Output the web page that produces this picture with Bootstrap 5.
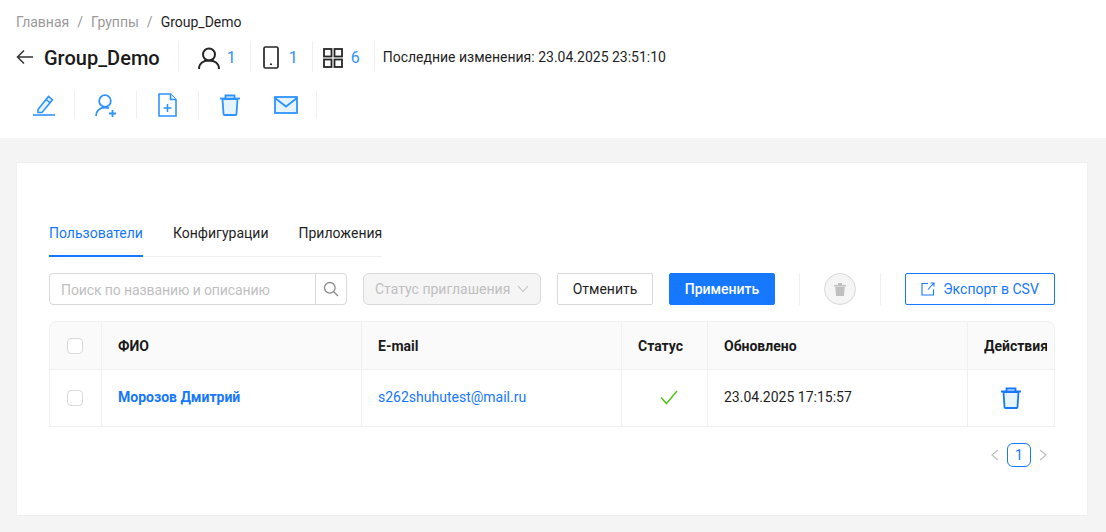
<!DOCTYPE html>
<html lang="ru">
<head>
  <meta charset="UTF-8" />
  <title>Group_Demo</title>
  <link href="https://cdn.jsdelivr.net/npm/bootstrap@5.3.3/dist/css/bootstrap.min.css" rel="stylesheet">
  <style>
    html, body { height: 532px; overflow: hidden; }
    body { font-family: Roboto, "Liberation Sans", sans-serif; font-size: 14px; color: #1f1f1f; background: #f4f4f4; }
    svg { display: block; flex: none; }

    .top-head { background: #fff; height: 138px; padding: 14px 16px 0; }
    .crumbs { margin: 0; height: 16px; line-height: 16px; font-size: 14px; --bs-breadcrumb-divider-color: #9a9a9a; --bs-breadcrumb-item-padding-x: 8px; --bs-breadcrumb-margin-bottom: 0; }
    .crumbs .breadcrumb-item a { color: #9a9a9a; text-decoration: none; }
    .crumbs .breadcrumb-item.active { color: #1f1f1f; }
    .title-row { height: 31px; margin-top: 11px; }
    .title-row h1 { font-size: 20px; font-weight: 500; margin: 0 0 0 10px; padding-top: 4px; line-height: 31px; color: #1a1a1a; }
    .stat { height: 31px; padding-top: 2px; border-left: 1px solid #f0f0f0; color: #2f93ff; font-size: 16px; }
    .stat-users { margin-left: 18px; padding-left: 19px; width: 72px; gap: 7px; }
    .stat-phones { width: 62px; padding-left: 12px; gap: 10px; }
    .stat-apps { width: 62px; padding-left: 10px; gap: 8px; }
    .changed { height: 31px; padding-top: 2px; border-left: 1px solid #f0f0f0; padding-left: 8px; color: #1f1f1f; }
    .tool-row { margin-top: 19px; height: 28px; }
    .tool { height: 28px; border-right: 1px solid #f0f0f0; width: 62px; }
    .tool-first { width: 59px; padding-left: 17px; }
    .tool-wide { width: 118px; padding-left: 21px; gap: 34px; }

    .body-pad { padding: 24px 18px 16px 16px; }
    .main-card { --bs-card-border-color: #f0f0f0; --bs-card-border-radius: 0; height: 354px; padding: 54px 32px 0; }
    .tabs-line { width: 333px; height: 40px; border-bottom: 1px solid #f0f0f0; gap: 30px; }
    .tabs-line .nav-link { padding: 0; height: 40px; line-height: 33px; color: #1f1f1f; font-size: 14px; }
    .tabs-line .nav-link.active { color: #1677ff; border-bottom: 2px solid #1677ff; }

    .filter-row { margin-top: 16px; height: 32px; }
    .search-box { width: 298px; height: 32px; }
    .search-box .form-control { height: 32px; font-size: 14px; padding: 5px 11px 3px; letter-spacing: -.1px; border-color: #d9d9d9; border-radius: 4px 0 0 4px; }
    .search-box .form-control::placeholder { color: #bfbfbf; }
    .search-btn { width: 32px; padding: 0; border: 1px solid #d9d9d9; border-left: 1px solid #d9d9d9; border-radius: 0 4px 4px 0; background: #fff; }
    .status-drop { width: 178px; height: 32px; margin-left: 16px; padding: 0 11px; background: #f5f5f5; border: 1px solid #d9d9d9; border-radius: 6px; color: #bfbfbf; }
    .btn-cancel { width: 96px; height: 32px; margin-left: 16px; padding: 0; font-size: 14px; color: #1f1f1f; background: #fff; border: 1px solid #d9d9d9; border-radius: 2px; }
    .btn-apply { width: 106px; height: 32px; margin-left: 16px; padding: 0; font-size: 14px; font-weight: 500; color: #fff; background: #1677ff; border: 1px solid #1677ff; border-radius: 2px; }
    .v-sep { width: 1px; height: 32px; background: #f0f0f0; }
    .del-round { width: 32px; height: 32px; margin: 0 24px; padding: 0; border-radius: 50%; background: #f5f5f5; border: 1px solid #d9d9d9; }
    .btn-export { width: 150px; height: 32px; margin-left: 24px; padding: 0; gap: 8px; font-size: 14px; color: #1677ff; background: #fff; border: 1px solid #1677ff; border-radius: 2px; }

    .grid-wrap { margin-top: 16px; width: 1006px; border: 1px solid #f0f0f0; border-radius: 8px 8px 0 0; border-bottom: 0; overflow: hidden; }
    .grid-table { table-layout: fixed; width: 1006px; margin: 0; border-collapse: separate; border-spacing: 0; --bs-table-bg: transparent; }
    .grid-table th, .grid-table td { border: 0; border-right: 1px solid #f0f0f0; border-bottom: 1px solid #f0f0f0; padding: 0 16px; vertical-align: middle; font-size: 14px; color: #1f1f1f; white-space: nowrap; overflow: hidden; }
    .grid-table th { height: 48px; padding-top: 1px; background: #fafafa; font-weight: 700; color: #1a1a1a; }
    .grid-table td { height: 57px; padding-bottom: 1px; }
    .grid-table th:last-child { border-right: 0; }
    .grid-table th.clip-cell { padding-right: 9px; }
    .check-box { width: 16px; height: 16px; margin-left: 1px; border: 1px solid #d9d9d9; border-radius: 4px; background: #fff; }
    .user-link { color: #1677ff; font-weight: 700; text-decoration: none; }
    .mail-link { color: #1677ff; text-decoration: none; }
    .status-ok { margin-left: 22px; }
    .row-trash { margin-left: 17px; }
    .clip-head { overflow: hidden; }

    .pager-row { margin-top: 16px; width: 1006px; height: 24px; padding-right: 7px; gap: 7px; }
    .page-one { width: 24px; height: 24px; line-height: 22px; text-align: center; color: #1677ff; border: 1px solid #1677ff; border-radius: 6px; }
  </style>
</head>
<body>

  <div class="top-head">
    <nav aria-label="breadcrumb">
      <ol class="breadcrumb crumbs">
        <li class="breadcrumb-item"><a href="#">Главная</a></li>
        <li class="breadcrumb-item"><a href="#">Группы</a></li>
        <li class="breadcrumb-item active" aria-current="page">Group_Demo</li>
      </ol>
    </nav>

    <div class="title-row d-flex align-items-center">
      <svg width="18" height="18" viewBox="0 0 18 18" fill="none" stroke="#333" stroke-width="1.500"><path d="M17 9H1.500M8 2.500 1.500 9 8 15.500"/></svg>
      <h1>Group_Demo</h1>
      <div class="stat stat-users d-flex align-items-center">
        <svg width="22" height="22" viewBox="0 0 22 22" fill="none" stroke="#262626" stroke-width="2"><circle cx="11" cy="7.500" r="6"/><path d="M1 22c0-5.500 4-8.500 10-8.500S21 16.500 21 22"/></svg>
        <span>1</span>
      </div>
      <div class="stat stat-phones d-flex align-items-center">
        <svg width="16" height="23" viewBox="0 0 16 23" fill="none" stroke="#262626" stroke-width="1.700"><rect x="1" y="1" width="14" height="21" rx="1.500"/><rect x="7" y="17.500" width="2" height="1.500" fill="#262626" stroke="none"/></svg>
        <span>1</span>
      </div>
      <div class="stat stat-apps d-flex align-items-center">
        <svg width="20" height="20" viewBox="0 0 20 20" fill="none" stroke="#262626" stroke-width="1.800"><rect x="1" y="1" width="7.500" height="7.500"/><rect x="11.500" y="1" width="7.500" height="7.500"/><rect x="1" y="11.500" width="7.500" height="7.500"/><rect x="11.500" y="11.500" width="7.500" height="7.500"/></svg>
        <span>6</span>
      </div>
      <div class="changed d-flex align-items-center">Последние изменения: 23.04.2025 23:51:10</div>
    </div>

    <div class="tool-row d-flex">
      <div class="tool tool-first d-flex align-items-center">
        <svg width="22" height="22" viewBox="0 0 22 22" fill="none" stroke="#2f93ff" stroke-width="1.600"><path d="M5 15.500 15.500 2.500l4 3.300-10.500 12.700H5z" fill="#e6f4ff"/><path d="M13.200 5.500l4 3.300"/><path d="M0 21h22"/></svg>
      </div>
      <div class="tool d-flex align-items-center justify-content-center">
        <svg width="21" height="23" viewBox="0 0 21 23" fill="none" stroke="#2f93ff" stroke-width="1.800"><circle cx="10" cy="7" r="5.800"/><path d="M1 22c0-5 3.500-8.500 9-8.500 1.500 0 3 .2 4 .7"/><path d="M14 19.500h7M17.500 16v7" stroke-width="1.800"/></svg>
      </div>
      <div class="tool d-flex align-items-center justify-content-center">
        <svg width="19" height="24" viewBox="0 0 19 24" fill="none" stroke="#2f93ff" stroke-width="1.600"><path d="M1 1h11.500L18 6.500V23H1z"/><path d="M12.500 1v5.500H18" fill="#e6f4ff"/><path d="M5.500 15h8M9.500 11v8"/></svg>
      </div>
      <div class="tool tool-wide d-flex align-items-center">
        <svg width="20" height="22" viewBox="0 0 20 22" fill="none" stroke="#2f93ff" stroke-width="1.800"><path d="M2.500 5h15l-1 15a1 1 0 0 1-1 1h-11a1 1 0 0 1-1-1z" fill="#e6f4ff"/><path d="M0 4.500h20"/><path d="M5.500 4.500V1.500h9v3"/></svg>
        <svg width="24" height="18" viewBox="0 0 24 18" fill="#e6f4ff" stroke="#2f93ff" stroke-width="1.800"><rect x="1" y="1" width="22" height="16"/><path d="M1 2l11 8.500L23 2" fill="none"/></svg>
      </div>
    </div>
  </div>

  <div class="body-pad">
    <div class="card main-card">
      <ul class="nav tabs-line flex-nowrap">
        <li class="nav-item"><a class="nav-link active" href="#">Пользователи</a></li>
        <li class="nav-item"><a class="nav-link" href="#">Конфигурации</a></li>
        <li class="nav-item"><a class="nav-link" href="#">Приложения</a></li>
      </ul>

      <div class="filter-row d-flex align-items-center">
        <div class="input-group search-box">
          <input type="text" class="form-control" placeholder="Поиск по названию и описанию" />
          <button class="search-btn d-flex align-items-center justify-content-center" type="button" aria-label="Поиск">
            <svg width="16" height="16" viewBox="0 0 16 16" fill="none" stroke="#8c8c8c" stroke-width="1.300"><circle cx="6.800" cy="6.800" r="5.300"/><path d="M10.700 10.700 15 15"/></svg>
          </button>
        </div>
        <div class="status-drop d-flex align-items-center justify-content-between">
          <span>Статус приглашения</span>
          <svg width="12" height="8" viewBox="0 0 12 8" fill="none" stroke="#bfbfbf" stroke-width="1.100"><path d="M1 1l5 5.500L11 1"/></svg>
        </div>
        <button class="btn btn-cancel" type="button">Отменить</button>
        <button class="btn btn-apply" type="button">Применить</button>
        <div class="v-sep ms-4"></div>
        <button class="del-round d-flex align-items-center justify-content-center" type="button" aria-label="Удалить">
          <svg width="12" height="13" viewBox="0 0 12 13" fill="#bfbfbf"><path d="M0 2h12v1.500H0zM4 0h4v2H4zM1.300 4h9.400l-.7 9H2z"/></svg>
        </button>
        <div class="v-sep"></div>
        <button class="btn btn-export d-flex align-items-center justify-content-center" type="button">
          <svg width="14" height="14" viewBox="0 0 14 14" fill="none" stroke="#1677ff" stroke-width="1.100"><path d="M7 1.500H1v11.500h11.500V7.500"/><path d="M7 7.500 13 1M9.500 1H13v3.500"/></svg>
          <span>Экспорт в CSV</span>
        </button>
      </div>

      <div class="grid-wrap">
        <table class="table grid-table">
          <colgroup>
            <col style="width:52px"><col style="width:260px"><col style="width:260px"><col style="width:86px"><col style="width:260px"><col style="width:88px">
          </colgroup>
          <thead>
            <tr>
              <th><div class="check-box"></div></th>
              <th>ФИО</th>
              <th>E-mail</th>
              <th>Статус</th>
              <th>Обновлено</th>
              <th class="clip-cell"><div class="clip-head">Действия</div></th>
            </tr>
          </thead>
          <tbody>
            <tr>
              <td><div class="check-box"></div></td>
              <td><a class="user-link" href="#">Морозов Дмитрий</a></td>
              <td><a class="mail-link" href="#">s262shuhutest@mail.ru</a></td>
              <td>
                <svg class="status-ok" width="18" height="15" viewBox="0 0 18 15" fill="none" stroke="#52c41a" stroke-width="1.500"><path d="M1 7.500 6.500 13.500 17 1"/></svg>
              </td>
              <td>23.04.2025 17:15:57</td>
              <td>
                <svg class="row-trash" width="20" height="22" viewBox="0 0 20 22" fill="none" stroke="#1677ff" stroke-width="1.800"><path d="M2.500 5h15l-1 15a1 1 0 0 1-1 1h-11a1 1 0 0 1-1-1z" fill="#e6f4ff"/><path d="M0 4.500h20"/><path d="M5.500 4.500V1.500h9v3"/></svg>
              </td>
            </tr>
          </tbody>
        </table>
      </div>

      <div class="pager-row d-flex align-items-center justify-content-end">
        <svg width="10" height="12" viewBox="0 0 10 12" fill="none" stroke="#bfbfbf" stroke-width="1.200"><path d="M8 1 2 6l6 5"/></svg>
        <div class="page-one">1</div>
        <svg width="10" height="12" viewBox="0 0 10 12" fill="none" stroke="#bfbfbf" stroke-width="1.200"><path d="M2 1l6 5-6 5"/></svg>
      </div>
    </div>
  </div>

  <script src="https://cdn.jsdelivr.net/npm/bootstrap@5.3.3/dist/js/bootstrap.bundle.min.js"></script>
</body>
</html>
